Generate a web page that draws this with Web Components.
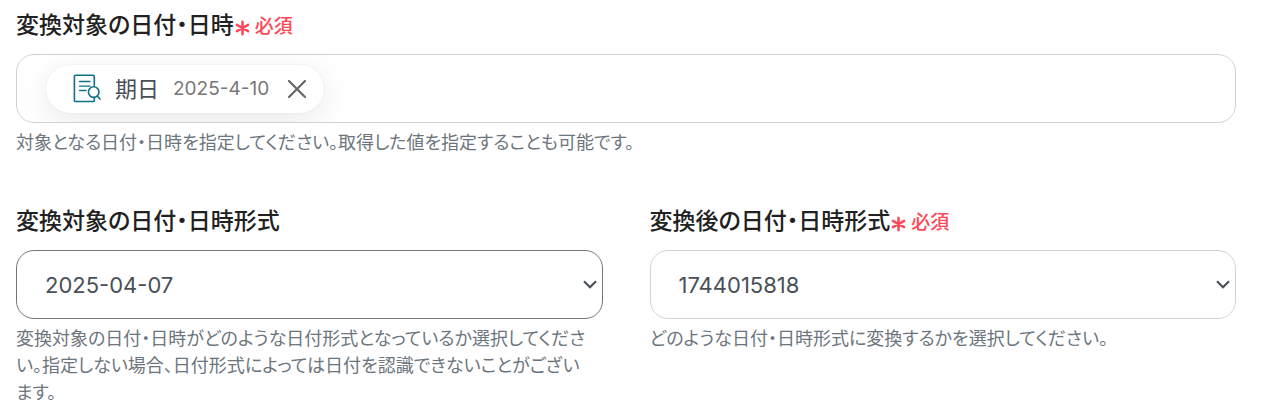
<!DOCTYPE html>
<html lang="ja">
<head>
<meta charset="utf-8">
<meta name="viewport" content="width=device-width, initial-scale=1">
<title>日付・日時形式の変換</title>
<style>
  body {
    margin: 0;
    background: #fff;
    color: #212529;
    font-family: Inter, "Noto Sans CJK JP", sans-serif;
    font-feature-settings: "palt";
  }
</style>
</head>
<body>
<date-convert-form></date-convert-form>

<script>
const define = (name, html, Base = HTMLElement) => {
  const template = document.createElement('template');
  template.innerHTML = html;
  customElements.define(name, class extends Base {
    constructor() {
      super();
      this.attachShadow({ mode: 'open' }).append(template.content.cloneNode(true));
    }
  });
};

define('required-mark', `
  <style>
    :host { display: inline-flex; align-items: center; gap: 5px; padding-top: 3px; color: #ff4757; font-size: 19px; line-height: 28px; font-weight: 500; }
    svg { display: block; width: 15px; height: 16px; margin-top: 2px; }
  </style>
  <svg viewBox="0 0 15 16" fill="none" stroke="currentColor" stroke-width="2.5" stroke-linecap="round" aria-hidden="true">
    <path d="M7.5 1.8v12.4M1.9 4.9l11.2 6.2M13.1 4.9L1.9 11.1"/>
  </svg>
  <span>必須</span>
`);

define('help-text', `
  <style>
    :host { display: block; margin-top: 6px; padding-right: 8px; color: #6c757d; font-size: 18px; line-height: 27px; }
  </style>
  <slot></slot>
`);

define('value-chip', `
  <style>
    :host {
      display: inline-flex; align-items: center; box-sizing: border-box; height: 48px;
      padding: 0 16px 0 27px; border-radius: 24px; background: #fff;
      box-shadow: 0 0 2px rgba(0,0,0,.08), 0 8px 32px rgba(0,0,0,.09);
      color: #495057; font-size: 22px; line-height: 32px;
    }
    .icon { width: 30px; height: 30px; margin-right: 12px; }
    .value { margin-left: 14px; color: #777; font-size: 19px; }
    button { display: flex; margin: 0 0 0 17px; padding: 0; border: 0; background: none; color: #666; cursor: pointer; }
    button svg { width: 22px; height: 22px; }
  </style>
  <svg class="icon" viewBox="0 0 30 30" fill="none" stroke="#0f7187" stroke-width="1.6" stroke-linecap="round" stroke-linejoin="round" aria-hidden="true">
    <path d="M21.3 11.5V2.4Q21.3 1.3 20.1 1.3H2.5Q1.4 1.3 1.4 2.4V26.4Q1.4 27.5 2.5 27.5H20.1Q21.3 27.5 21.3 26.4V24"/>
    <path d="M6.5 7.5h10.5M6.5 12.1h10.5M6.5 16.5h6.5" stroke-width="1.4"/>
    <circle cx="20.7" cy="18.1" r="5.3"/>
    <path d="M24.4 22.1l2.6 3"/>
  </svg>
  <slot></slot>
  <span class="value"><slot name="value"></slot></span>
  <button type="button" aria-label="削除">
    <svg viewBox="0 0 22 22" fill="none" stroke="currentColor" stroke-width="2.2" stroke-linecap="round" aria-hidden="true"><path d="M3 3l16 16M19 3L3 19"/></svg>
  </button>
`);

const labelStyle = `
  .label { display: flex; align-items: center; gap: 1px; height: 34px; margin-bottom: 12px; }
  .title { color: #212121; font-size: 23px; line-height: 34px; font-weight: 500; }
`;

define('chip-field', `
  <style>
    :host { display: block; }
    ${labelStyle}
    .box { display: flex; align-items: center; box-sizing: border-box; height: 69px; padding: 0 29px; border: 1px solid #ced4da; border-radius: 18px; background: #fff; overflow: hidden; }
  </style>
  <div class="label"><span class="title" id="title"><slot name="label"></slot></span><slot name="mark"></slot></div>
  <div class="box" role="group" aria-labelledby="title"><slot></slot></div>
  <slot name="help"></slot>
`);

define('select-field', `
  <style>
    :host { display: block; min-width: 0; }
    ${labelStyle}
    .control { display: grid; align-items: center; }
    select, .control svg { grid-area: 1 / 1; }
    select {
      appearance: none; box-sizing: border-box; width: 100%; height: 69px; margin: 0; padding: 0 28px;
      border: 1px solid #ced4da; border-radius: 18px; background: #fff; color: #495057;
      font-family: inherit; font-size: 22px; font-feature-settings: inherit;
    }
    :host([active]) select { border-color: #767676; }
    .control svg { justify-self: end; width: 16px; height: 16px; margin-right: 5px; pointer-events: none; }
  </style>
  <div class="label"><label class="title" for="control"></label><slot name="mark"></slot></div>
  <div class="control">
    <select id="control"><option></option></select>
    <svg viewBox="0 0 16 16" fill="none" stroke="#495057" stroke-width="2.2" aria-hidden="true"><path d="M2 4.3l6 6 6-6"/></svg>
  </div>
  <slot name="help"></slot>
`, class extends HTMLElement {
  connectedCallback() {
    this.shadowRoot.querySelector('label').textContent = this.getAttribute('label');
    this.shadowRoot.querySelector('option').textContent = this.getAttribute('value');
  }
});

define('date-convert-form', `
  <style>
    :host { display: block; padding: 8px 31px 0 16px; }
    .row { display: grid; grid-template-columns: 1fr 1fr; gap: 47px; margin-top: 48px; align-items: start; }
    @media (max-width: 700px) { .row { grid-template-columns: 1fr; } }
  </style>
  <chip-field>
    <span slot="label">変換対象の日付・日時</span>
    <required-mark slot="mark"></required-mark>
    <value-chip>期日<span slot="value">2025-4-10</span></value-chip>
    <help-text slot="help">対象となる日付・日時を指定してください。取得した値を指定することも可能です。</help-text>
  </chip-field>
  <div class="row">
    <select-field label="変換対象の日付・日時形式" value="2025-04-07" active>
      <help-text slot="help">変換対象の日付・日時がどのような日付形式となっているか選択してください。指定しない場合、日付形式によっては日付を認識できないことがございます。</help-text>
    </select-field>
    <select-field label="変換後の日付・日時形式" value="1744015818">
      <required-mark slot="mark"></required-mark>
      <help-text slot="help">どのような日付・日時形式に変換するかを選択してください。</help-text>
    </select-field>
  </div>
`);
</script>
</body>
</html>
